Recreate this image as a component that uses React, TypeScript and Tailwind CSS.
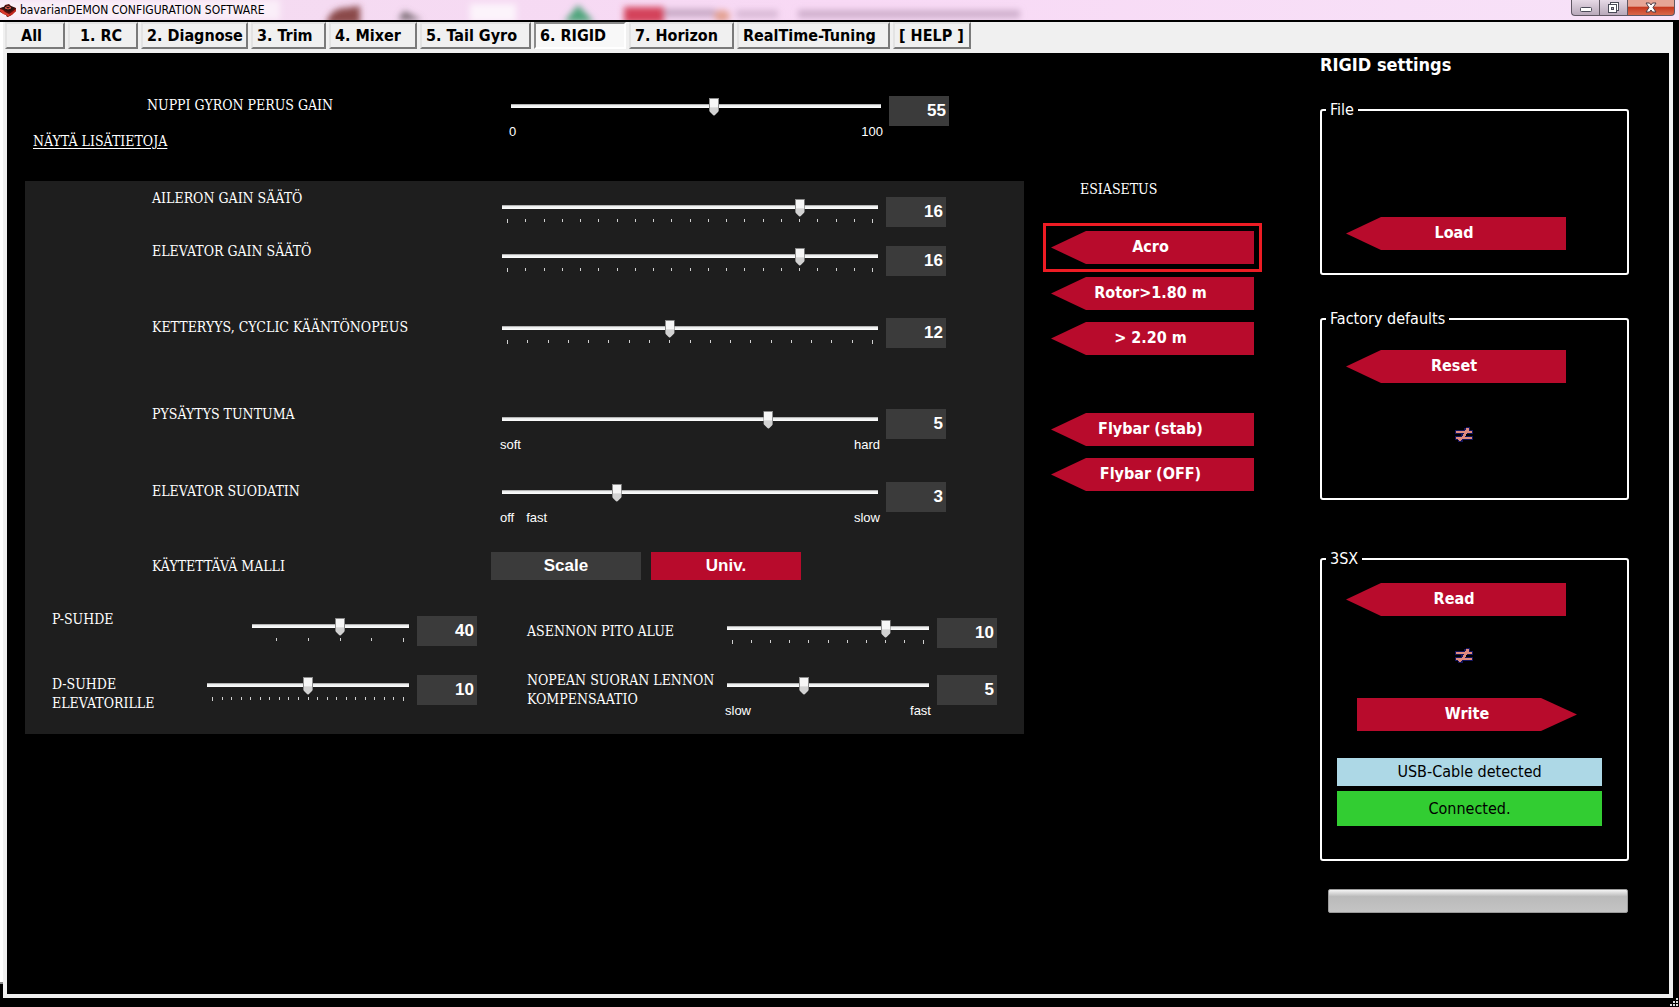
import React, { useId, useState } from "react";
import clsx from "clsx";

const tahoma = "font-['DejaVu_Sans_Condensed','DejaVu_Sans',sans-serif]";
const serif = "font-['DejaVu_Serif_Condensed','DejaVu_Serif',serif]";
const arial = "font-['Liberation_Sans',Arial,sans-serif]";

const tabs = [
  { name: "All", className: "w-[60px] pl-3.5" },
  { name: "1. RC", className: "w-[70px] pl-2.5" },
  { name: "2. Diagnose", className: "w-[107px] pl-1" },
  { name: "3. Trim", className: "w-[75px] pl-1" },
  { name: "4. Mixer", className: "w-[88px] pl-1" },
  { name: "5. Tail Gyro", className: "w-[111px] pl-1" },
  { name: "6. RIGID", className: "w-[92px] pl-1" },
  { name: "7. Horizon", className: "w-[105px] pl-1" },
  { name: "RealTime-Tuning", className: "w-[153px] pl-1" },
  { name: "[ HELP ]", className: "w-[78px] pl-1" },
];

function AppIcon() {
  return (
    <svg width="16" height="14" viewBox="0 0 16 14" aria-hidden="true">
      <path d="M0 5l4-1 1-2 4-1 2 2 5 2v3l-6 5-3 1-1-2-6-3z" fill="#5a0d0d" />
      <path d="M1 5l7-3 7 3-6 4z" fill="#2a1414" />
      <path d="M0 6l3 1 2 2 4 2v3l-3-2-3-1-3-3z" fill="#d8382c" />
      <path d="M9 11l3-2 4-3v2l-4 4-3 1z" fill="#c2271f" />
      <path d="M5 5l3-2 3 2-3 1z" fill="none" stroke="#e2574a" />
    </svg>
  );
}

// what shines through the glass of the title bar
function GlassReflection() {
  return (
    <svg className="absolute inset-0 h-full w-full" aria-hidden="true">
      <defs>
        <filter id="glass" x="-20%" y="-50%" width="140%" height="200%">
          <feGaussianBlur stdDeviation="3" />
        </filter>
      </defs>
      <g filter="url(#glass)">
        <rect x="-10" y="0" width="290" height="20" fill="#fff" opacity=".55" />
        <path d="M326 24q4-16 20-16l14-2v18z" fill="#8a4848" />
        <path d="M398 20l6-9 18 9z" fill="#76686f" />
        <rect x="470" y="4" width="46" height="18" fill="#fff" opacity=".7" />
        <path d="M564 22l14-17 16 17z" fill="#4fa57c" />
        <rect x="624" y="7" width="40" height="16" fill="#d4435a" />
        <rect x="664" y="9" width="52" height="8" fill="#b294b0" opacity=".7" />
        <ellipse cx="722" cy="16" rx="8" ry="6" fill="#e3a090" />
        <rect x="736" y="10" width="42" height="8" fill="#c3a3c0" opacity=".6" />
        <rect x="798" y="10" width="222" height="8" fill="#bb9bb9" opacity=".7" />
      </g>
    </svg>
  );
}

function TitleBar() {
  const control = "flex h-4 items-center justify-center border border-t-0 border-[#5f5763]";
  return (
    <header className="relative flex h-[22px] shrink-0 justify-between overflow-hidden border-b-2 border-black bg-linear-to-r from-[#f3dcf0] via-[#f8d9f5] to-[#f7e2f8]">
      <GlassReflection />
      <div className="relative flex items-center gap-1">
        <AppIcon />
        <h1 className={clsx(tahoma, "text-xs text-black")}>bavarianDEMON CONFIGURATION SOFTWARE</h1>
      </div>
      <div className="relative flex pr-1">
        <button aria-label="Minimize" className={clsx(control, "w-7 rounded-bl border-r-0 bg-linear-to-b from-[#e6d9e6] to-[#b8a9ba]")}>
          <svg className="mt-1" width="12" height="5">
            <rect x=".5" y=".5" width="11" height="4" rx="1" fill="#fff" stroke="#4b4b58" />
          </svg>
        </button>
        <button aria-label="Restore" className={clsx(control, "w-7 border-r-0 bg-linear-to-b from-[#e6d9e6] to-[#b8a9ba]")}>
          <svg width="13" height="13" fill="#fff" stroke="#4b4b58">
            <rect x="3.5" y="1.5" width="8" height="8" />
            <rect x="1.5" y="3.5" width="8" height="8" />
            <rect x="4.5" y="6.5" width="2" height="2" fill="#b8a9ba" />
          </svg>
        </button>
        <button aria-label="Close" className={clsx(control, "w-12 rounded-br bg-linear-to-b from-[#e6a596] from-40% via-[#c63a20] via-50% to-[#d9674a]")}>
          <svg width="12" height="11" viewBox="0 0 12 11">
            <path d="M1 1h3.500l1.500 2 1.500-2H11L8 5.500l3 4.500H7.500L6 8l-1.500 2H1l3-4.500z" fill="#fff" stroke="#4b3b45" />
          </svg>
        </button>
      </div>
    </header>
  );
}

function Toolbar() {
  const [active, setActive] = useState("6. RIGID");
  return (
    <nav className="flex h-[31px] shrink-0 items-start gap-[3px] pl-0.5">
      {tabs.map((tab) => (
        <button
          key={tab.name}
          onClick={() => setActive(tab.name)}
          className={clsx(
            tahoma,
            "h-[27px] shrink-0 border-2 text-left text-base leading-5 font-bold whitespace-nowrap text-black",
            tab.className,
            tab.name === active
              ? "border-t-[#8a8a8a] border-r-white border-b-white border-l-[#8a8a8a] bg-[#f8f8f8]"
              : "border-t-[#e3e3e3] border-r-[#7a7a7a] border-b-[#7a7a7a] border-l-[#e3e3e3] bg-[#f0f0f0]"
          )}
        >
          {tab.name}
        </button>
      ))}
    </nav>
  );
}

type SliderProps = {
  label: string;
  labelClass: string;
  min: number;
  max: number;
  initial: number;
  ticks?: number[];
  captions?: [string[], string];
  fieldClass?: string;
  children?: React.ReactNode;
};

function range(from: number, to: number, step = 1) {
  const out: number[] = [];
  for (let i = from; i <= to; i += step) out.push(i);
  return out;
}

function Slider({ label, labelClass, min, max, initial, ticks, captions, fieldClass, children }: SliderProps) {
  const id = useId();
  const [value, setValue] = useState(initial);
  return (
    <div className="flex items-start">
      <div className={clsx("shrink-0", labelClass)}>
        <label htmlFor={id} className={clsx(serif, "block text-sm leading-[19px]")}>
          {label}
        </label>
        {children}
      </div>
      <div className={clsx("flex min-w-0 flex-1 items-start gap-2", fieldClass)}>
        <div className="min-w-0 flex-1">
          <input
            id={id}
            type="range"
            min={min}
            max={max}
            value={value}
            onChange={(e) => setValue(Number(e.target.value))}
            className="block h-5 w-full appearance-none bg-transparent [&::-webkit-slider-runnable-track]:h-1 [&::-webkit-slider-runnable-track]:bg-linear-to-b [&::-webkit-slider-runnable-track]:from-[#b4b4b4] [&::-webkit-slider-runnable-track]:from-25% [&::-webkit-slider-runnable-track]:via-[#e8eaea] [&::-webkit-slider-runnable-track]:via-25% [&::-webkit-slider-runnable-track]:to-white [&::-webkit-slider-thumb]:-mt-1.5 [&::-webkit-slider-thumb]:h-[18px] [&::-webkit-slider-thumb]:w-2.5 [&::-webkit-slider-thumb]:appearance-none [&::-webkit-slider-thumb]:border [&::-webkit-slider-thumb]:border-[#8c8c8c] [&::-webkit-slider-thumb]:bg-linear-to-b [&::-webkit-slider-thumb]:from-[#f6f6f6] [&::-webkit-slider-thumb]:from-50% [&::-webkit-slider-thumb]:to-[#d2d2d2] [&::-webkit-slider-thumb]:to-55% [&::-webkit-slider-thumb]:[clip-path:polygon(0_0,100%_0,100%_13px,50%_100%,0_13px)]"
          />
          {ticks && (
            <div className="relative mr-1.5 ml-[5px] mt-0.5 h-1">
              {ticks.map((t) => (
                <span
                  key={t}
                  className={clsx("absolute top-0 w-px bg-[#d0d0d0]", t === min || t === max ? "h-1" : "h-[3px]")}
                  style={{ left: `${((t - min) / (max - min)) * 100}%` }}
                />
              ))}
            </div>
          )}
          {captions && (
            <div className={clsx(arial, "-mx-0.5 mt-2 flex justify-between text-[13px] leading-4")}>
              <span className="flex gap-3">
                {captions[0].map((c) => (
                  <span key={c}>{c}</span>
                ))}
              </span>
              <span>{captions[1]}</span>
            </div>
          )}
        </div>
        <input
          type="text"
          aria-label={`${label} arvo`}
          value={value}
          onChange={(e) => setValue(Number(e.target.value) || min)}
          className={clsx(arial, "h-[30px] w-[60px] shrink-0 bg-[#3b3b3b] pr-[3px] text-right text-[17px] font-bold text-white")}
        />
      </div>
    </div>
  );
}

function ArrowButton({ children, right, className }: { children: React.ReactNode; right?: boolean; className?: string }) {
  return (
    <button
      className={clsx(
        tahoma,
        "block h-[33px] bg-[#b80b2c] pb-0.5 text-center text-base leading-5 font-bold text-white",
        right
          ? "[clip-path:polygon(0_0,calc(100%-36px)_0,100%_50%,calc(100%-36px)_100%,0_100%)]"
          : "pr-1 [clip-path:polygon(35px_0,100%_0,100%_100%,35px_100%,0_50%)]",
        className
      )}
    >
      {children}
    </button>
  );
}

function NotEqual({ className }: { className?: string }) {
  return (
    <svg className={className} width="18" height="15" viewBox="0 0 18 15" role="img" aria-label="not equal">
      <path d="M0 3h9V1h2V0h4v3h3v4h-7v2h7v4H8v2H3v-2H0V9h6V7H0z" fill="#14145c" />
      <path d="M1 4h9V3h1V1h3v3h3v2h-5v1h-1v2h-1v1h7v2H7v1H6v1H4v-1H3v-1H1v-2h6V9h1V7h1V6H1z" fill="#df8a80" />
    </svg>
  );
}

function ModelSwitch() {
  const [model, setModel] = useState("Univ.");
  return (
    <div className="mt-[26px] flex items-center">
      <span id="model" className={clsx(serif, "w-[466px] shrink-0 pl-[127px] text-sm leading-[19px]")}>
        KÄYTETTÄVÄ MALLI
      </span>
      <div role="group" aria-labelledby="model" className="flex gap-2.5">
        {["Scale", "Univ."].map((name) => (
          <button
            key={name}
            aria-pressed={model === name}
            onClick={() => setModel(name)}
            className={clsx(arial, "h-7 w-[150px] text-[17px] font-bold", model === name ? "bg-[#b80b2c]" : "bg-[#3b3b3b]")}
          >
            {name}
          </button>
        ))}
      </div>
    </div>
  );
}

function GainPanel() {
  const row = "pl-[127px] w-[477px]";
  return (
    <section className="mt-[29px] bg-[#1e1e1e] pt-2 pb-[15px]">
      <div className="pr-[78px]">
        <Slider label="AILERON GAIN SÄÄTÖ" labelClass={row} fieldClass="mt-2" min={0} max={20} initial={16} ticks={range(0, 20)} />
        <div className="mt-[15px]">
          <Slider label="ELEVATOR GAIN SÄÄTÖ" labelClass={row} fieldClass="mt-1" min={0} max={20} initial={16} ticks={range(0, 20)} />
        </div>
        <div className="mt-[42px]">
          <Slider label="KETTERYYS, CYCLIC KÄÄNTÖNOPEUS" labelClass={row} min={4} max={22} initial={12} ticks={range(4, 22)} />
        </div>
        <div className="mt-[57px]">
          <Slider label="PYSÄYTYS TUNTUMA" labelClass={row} fieldClass="mt-1" min={0} max={7} initial={5} captions={[["soft"], "hard"]} />
        </div>
        <div className="mt-[29px]">
          <Slider label="ELEVATOR SUODATIN" labelClass={row} min={0} max={10} initial={3} captions={[["off", "fast"], "slow"]} />
        </div>
      </div>
      <ModelSwitch />
      <div className="mt-[30px] grid grid-cols-[425fr_470fr] gap-x-[50px] gap-y-[23px] px-[27px]">
        <Slider label="P-SUHDE" labelClass="w-[200px]" fieldClass="mt-1.5" min={14} max={60} initial={40} ticks={range(20, 60, 10)} />
        <div className="pt-2">
          <Slider label="ASENNON PITO ALUE" labelClass="w-[200px] pt-1" min={2} max={12} initial={10} ticks={range(2, 12)} />
        </div>
        <div className="pt-1">
          <Slider label="D-SUHDE ELEVATORILLE" labelClass="w-[155px] pr-8" min={0} max={20} initial={10} ticks={range(0, 20)} />
        </div>
        <Slider
          label="NOPEAN SUORAN LENNON KOMPENSAATIO"
          labelClass="w-[200px]"
          fieldClass="mt-1"
          min={2}
          max={10}
          initial={5}
          captions={[["slow"], "fast"]}
        />
      </div>
    </section>
  );
}

function Presets() {
  return (
    <section className="mr-[58px] w-[219px] shrink-0 pt-[127px]">
      <h2 className={clsx(serif, "pl-[37px] text-sm leading-[19px]")}>ESIASETUS</h2>
      <div className="mt-6 border-3 border-[#ed1c24] p-[5px]">
        <ArrowButton className="w-full">Acro</ArrowButton>
      </div>
      <div className="flex flex-col px-2 pt-[5px]">
        <ArrowButton>Rotor&gt;1.80 m</ArrowButton>
        <ArrowButton className="mt-3">&gt; 2.20 m</ArrowButton>
        <ArrowButton className="mt-[58px]">Flybar (stab)</ArrowButton>
        <ArrowButton className="mt-3">Flybar (OFF)</ArrowButton>
      </div>
    </section>
  );
}

function Group({ title, className, children }: { title: string; className: string; children: React.ReactNode }) {
  return (
    <fieldset className={clsx("rounded-[3px] border-2 border-white", className)}>
      <legend className={clsx(tahoma, "ml-1 px-1 text-base leading-5")}>{title}</legend>
      {children}
    </fieldset>
  );
}

function Settings() {
  const status = "mr-[25px] ml-[15px] text-center text-base text-black";
  return (
    <section className={clsx(tahoma, "w-[309px] shrink-0")}>
      <h2 className="text-lg leading-6 font-bold">RIGID settings</h2>
      <Group title="File" className="mt-[23px] pt-[97px] pb-[23px]">
        <ArrowButton className="ml-6 w-[220px]">Load</ArrowButton>
      </Group>
      <Group title="Factory defaults" className="mt-[34px] pt-[21px] pb-14">
        <ArrowButton className="ml-6 w-[220px]">Reset</ArrowButton>
        <NotEqual className="mt-11 ml-[133px]" />
      </Group>
      <Group title="3SX" className="mt-[49px] pt-3.5 pb-[33px]">
        <ArrowButton className="ml-6 w-[220px]">Read</ArrowButton>
        <NotEqual className="mt-8 ml-[133px]" />
        <ArrowButton right className="mt-[35px] ml-[35px] w-[220px]">
          Write
        </ArrowButton>
        <p className={clsx(status, "mt-[27px] bg-[#add8e6] leading-7")}>USB-Cable detected</p>
        <p className={clsx(status, "mt-[5px] bg-[#32cd32] leading-[35px]")}>Connected.</p>
      </Group>
      <progress
        value={0}
        max={100}
        aria-label="Progress"
        className="mt-7 ml-2 block h-6 w-[300px] appearance-none [&::-webkit-progress-bar]:rounded-xs [&::-webkit-progress-bar]:border [&::-webkit-progress-bar]:border-[#9a9a9a] [&::-webkit-progress-bar]:bg-linear-to-b [&::-webkit-progress-bar]:from-[#f4f4f4] [&::-webkit-progress-bar]:via-[#bababa] [&::-webkit-progress-bar]:via-30% [&::-webkit-progress-bar]:to-[#c4c4c4]"
      />
    </section>
  );
}

export default function App() {
  return (
    <div className="flex min-h-screen flex-col bg-black text-white">
      <TitleBar />
      <div className="relative flex flex-1 pr-1.5 pb-[9px]">
        <div className="mb-3.5 w-[3px] border-b-2 border-[#8a8a8a] bg-white" />
        <div className="flex min-w-0 flex-1 flex-col bg-[#f0f0f0]">
          <Toolbar />
          <main className="mx-1 mb-1 flex flex-1 items-start bg-black pr-10 pl-[18px]">
            <div className="mr-[19px] min-w-0 flex-1">
              <div className="pt-[43px] pr-[75px]">
                <Slider
                  label="NUPPI GYRON PERUS GAIN"
                  labelClass="w-[486px] [&>label]:pl-[122px]"
                  min={0}
                  max={100}
                  initial={55}
                  captions={[["0"], "100"]}
                >
                  <a href="#info" className={clsx(serif, "mt-[17px] ml-2 inline-block text-sm leading-[19px] underline underline-offset-2")}>
                    NÄYTÄ LISÄTIETOJA
                  </a>
                </Slider>
              </div>
              <GainPanel />
            </div>
            <Presets />
            <Settings />
          </main>
        </div>
        <svg className="absolute right-0 bottom-0" width="9" height="9" fill="#d8d8d8" aria-hidden="true">
          <path d="M6 0h2v2H6zM6 3h2v2H6zM3 3h2v2H3zM6 6h2v2H6zM3 6h2v2H3zM0 6h2v2H0z" />
        </svg>
      </div>
    </div>
  );
}
